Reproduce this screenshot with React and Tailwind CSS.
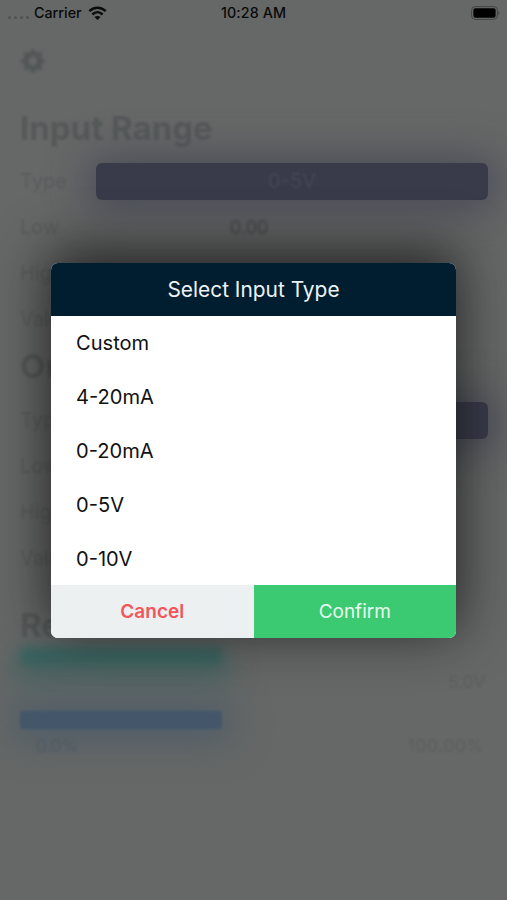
import { useState } from 'react'
import { BsGearFill } from 'react-icons/bs'

const options = ['Custom', '4-20mA', '0-20mA', '0-5V', '0-10V']

function StatusBar() {
  return (
    <div className="relative flex h-[26px] shrink-0 items-center justify-between pr-[7px] pl-2 text-[14.3px] font-medium text-[#090a0a]">
      <div className="flex items-center">
        <div className="mt-[9px] mr-[5px] flex gap-[3px]">
          {[0, 1, 2, 3].map(dot => (
            <span key={dot} className="h-[3px] w-[3px] rounded-full bg-[#505252]" />
          ))}
        </div>
        <span>Carrier</span>
        <svg viewBox="0 0 18 14" className="ml-[6px] h-[14px] w-[19px]" fill="none" stroke="currentColor">
          <path d="M.8 5.2C5.4.6 12.6.6 17.2 5.2" strokeWidth="2.5" />
          <path d="M3.9 8.5c3-2.9 7.2-2.9 10.2 0" strokeWidth="2.5" />
          <path d="M9 14 6 11c1.7-1.5 4.3-1.5 6 0z" fill="currentColor" stroke="none" />
        </svg>
      </div>
      <span className="absolute left-1/2 -translate-x-1/2 tracking-[0.1px] whitespace-nowrap">10:28 AM</span>
      <svg viewBox="0 0 29 14" className="h-[14px] w-[29px]">
        <rect x="0.6" y="0.6" width="25.8" height="12.8" rx="3.6" fill="none" stroke="#434545" />
        <rect x="2.4" y="2.3" width="22.2" height="9.4" rx="2" fill="#000" />
        <path d="M27.4 5v4c1.4-.5 1.4-3.5 0-4z" fill="#434545" />
      </svg>
    </div>
  )
}

function Heading({ children }) {
  return <h2 className="text-[33px] leading-[44px] font-bold text-[#565959] blur-[1px]">{children}</h2>
}

function Row({ label, children }) {
  return (
    <div className="flex h-[46px] items-center">
      <span className="w-[76px] text-[20px] text-[#595c5d] blur-[1.2px]">{label}</span>
      {children}
    </div>
  )
}

function TypeButton({ children }) {
  return (
    <div className="flex h-[37px] flex-1 items-center justify-center rounded-[6px] bg-[#393b4a] text-[20px] text-[#454754] shadow-[0_2px_40px_8px_rgba(64,66,84,0.75)] blur-[0.5px]">
      <span className="blur-[0.8px]">{children}</span>
    </div>
  )
}

function Page() {
  return (
    <div className="flex flex-1 flex-col pr-[19px] pl-5">
      <BsGearFill className="mt-[23px] mb-[2px] h-[24px] w-[26px] text-[#525657] blur-[1.6px]" />
      <div className="mt-[31px]">
        <Heading>Input Range</Heading>
      </div>
      <div className="mt-[8px]">
        <Row label="Type"><TypeButton>0-5V</TypeButton></Row>
        <Row label="Low"><span className="ml-[134px] text-[18px] text-[#464748] blur-[1.4px]">0.00</span></Row>
        <Row label="High" />
        <Row label="Value" />
      </div>
      <div className="mt-[2px]">
        <Heading>Output Range</Heading>
      </div>
      <div className="mt-[9px]">
        <Row label="Type"><TypeButton>4-20mA</TypeButton></Row>
        <Row label="Low" />
        <Row label="High" />
        <Row label="Value" />
      </div>
      <div className="mt-[22px]">
        <Heading>Results</Heading>
      </div>
      <div className="h-[18px] w-[202px] bg-[#3c6461] shadow-[0_10px_26px_6px_rgba(62,100,97,0.8)] blur-[4px]" />
      <div className="mt-[5px] flex h-[24px] justify-between pr-[3px] text-[17px] text-[#5d5f60]">
        <span />
        <span className="blur-[1.2px]">5.0V</span>
      </div>
      <div className="mt-[17px] h-[18px] w-[202px] rounded-[3px] bg-[#43566a] shadow-[0_2px_36px_10px_rgba(72,90,104,0.8)] blur-[1.5px]" />
      <div className="mt-[5px] flex justify-between pr-[4px] text-[17px] text-[#5d5f60]">
        <span className="ml-4 text-[#4f5a64] blur-[1.6px]">0.0%</span>
        <span className="tracking-[0.8px] blur-[1.2px]">100.00%</span>
      </div>
    </div>
  )
}

function SelectDialog({ onSelect }) {
  return (
    <div className="absolute inset-0 flex items-start justify-center pt-[262.5px]">
      <div className="rounded-[7px] shadow-[0_-10px_54px_2px_rgba(15,15,15,0.78)]">
        <div className="w-[405px] overflow-hidden rounded-[7px] bg-white">
          <div className="flex h-[53.5px] items-center justify-center bg-[#001e30] text-[20.9px] text-[#eef2f5]">
            Select Input Type
          </div>
          <ul>
            {options.map(option => (
              <li
                key={option}
                onClick={() => onSelect(option)}
                className="flex h-[53.8px] items-center pt-[1px] pl-[25px] text-[20.1px] text-[#111]"
              >
                {option}
              </li>
            ))}
          </ul>
          <div className="flex h-[53.5px]">
            <button className="flex-1 bg-[#ecf0f1] pt-[2px] text-[19px] font-semibold text-[#f2555a]">Cancel</button>
            <button className="flex-1 bg-[#3bca72] pt-[2px] text-[19px] text-[#e9fbf0]">Confirm</button>
          </div>
        </div>
      </div>
    </div>
  )
}

export default function App() {
  const [, setSelected] = useState('0-5V')

  return (
    <div className="relative flex h-[900px] w-[507px] flex-col overflow-hidden bg-[#666867] font-[Inter,sans-serif]">
      <StatusBar />
      <Page />
      <SelectDialog onSelect={setSelected} />
    </div>
  )
}
